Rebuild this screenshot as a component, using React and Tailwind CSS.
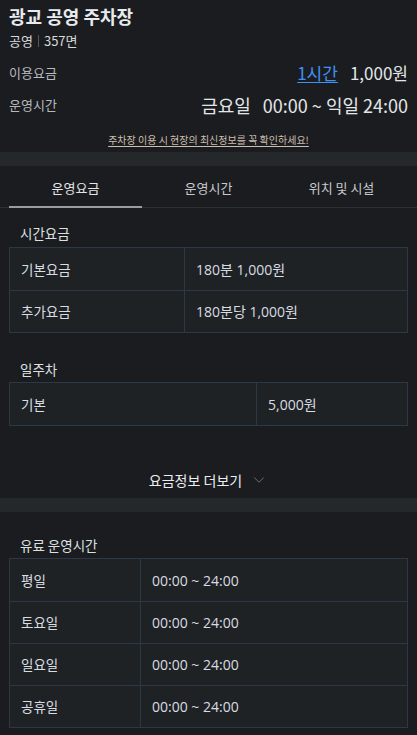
import { ChevronDown } from 'lucide-react';

const font = { fontFamily: '"Noto Sans CJK KR", "Noto Sans", sans-serif' };
const num = { fontFamily: '"Open Sans", "Noto Sans CJK KR", sans-serif' };

const Table = ({ rows, split }) => (
  <div className="mx-[9px] border border-[#2c3845] bg-[#1f2225]">
    {rows.map(([k, v], i) => (
      <div key={i} className={`flex h-[42px] items-center ${i > 0 ? 'border-t border-[#2c3845]' : 'h-[41px]'}`}>
        <div className={`${split} flex h-full items-center border-r border-[#2c3845] pl-[11px] text-[13.5px] text-[#d9dde2]`}>{k}</div>
        <div className="pl-[11px] text-[14px] text-[#d9dde2]" style={num}>{v}</div>
      </div>
    ))}
  </div>
);

export default function App() {
  return (
    <div className="min-h-screen w-[417px] bg-[#1b1c1f] text-[#e6e8eb]" style={font}>
      <div className="px-[9px] pt-[3px]">
        <h1 className="text-[18px] font-bold leading-[26px] text-[#e8ebee]">광교 공영 주차장</h1>
        <div className="mt-[3px] flex items-center text-[13px] leading-[18px] text-[#d5d9dd]">
          공영
          <span className="mx-[5px] h-[12px] w-px bg-[#555]"></span>
          357면
        </div>
        <div className="mt-[11px] flex h-[24px] items-center justify-between">
          <span className="text-[13px] text-[#b6babe]">이용요금</span>
          <span className="flex items-center gap-[12px] text-[17px]">
            <span className="text-[#3d93f5] underline underline-offset-2">1시간</span>
            <span className="text-[#e3e6e9]">1,000원</span>
          </span>
        </div>
        <div className="mt-[8px] flex h-[24px] items-center justify-between">
          <span className="text-[13px] text-[#b6babe]">운영시간</span>
          <span className="text-[18px] text-[#e3e6e9]">
            금요일<span className="ml-[12px]">00:00 ~ 익일 24:00</span>
          </span>
        </div>
        <div className="mt-[16px] pb-[5px] text-center text-[10px] leading-[14px] text-[#cdbfae] underline underline-offset-2">
          주차장 이용 시 현장의 최신정보를 꼭 확인하세요!
        </div>
      </div>
      <div className="h-[14px] bg-[#25282b]"></div>
      <div className="border-b border-[#2d3033] px-[9px]">
        <div className="grid grid-cols-3 text-center text-[13px] leading-[18px]">
          <div className="-mb-px border-b-2 border-[#9a9c9f] pb-[9px] pt-[13px] text-[#e3e6e9]">운영요금</div>
          <div className="pb-[10px] pt-[13px] text-[#c7cacd]">운영시간</div>
          <div className="pb-[10px] pt-[13px] text-[#c7cacd]">위치 및 시설</div>
        </div>
      </div>
      <div className="px-[20px] pb-[5px] pt-[16px] text-[13.5px] leading-[18px] text-[#dde0e3]">시간요금</div>
      <Table split="w-[175px]" rows={[['기본요금', '180분 1,000원'], ['추가요금', '180분당 1,000원']]} />
      <div className="px-[20px] pb-[4px] pt-[27px] text-[13.5px] leading-[18px] text-[#dde0e3]">일주차</div>
      <Table split="w-[247px]" rows={[['기본', '5,000원']]} />
      <div className="flex items-center justify-center gap-[8px] pb-[9px] pt-[45px] text-[14px] leading-[18px] text-[#eceef0]">
        요금정보 더보기
        <ChevronDown size={18} strokeWidth={1} className="text-[#8a8d90]" />
      </div>
      <div className="h-[14px] bg-[#25282b]"></div>
      <div className="px-[20px] pb-[4px] pt-[24px] text-[13.5px] leading-[18px] text-[#dde0e3]">유료 운영시간</div>
      <Table
        split="w-[131px]"
        rows={[['평일', '00:00 ~ 24:00'], ['토요일', '00:00 ~ 24:00'], ['일요일', '00:00 ~ 24:00'], ['공휴일', '00:00 ~ 24:00']]}
      />
      <div className="h-[10px]"></div>
    </div>
  );
}
